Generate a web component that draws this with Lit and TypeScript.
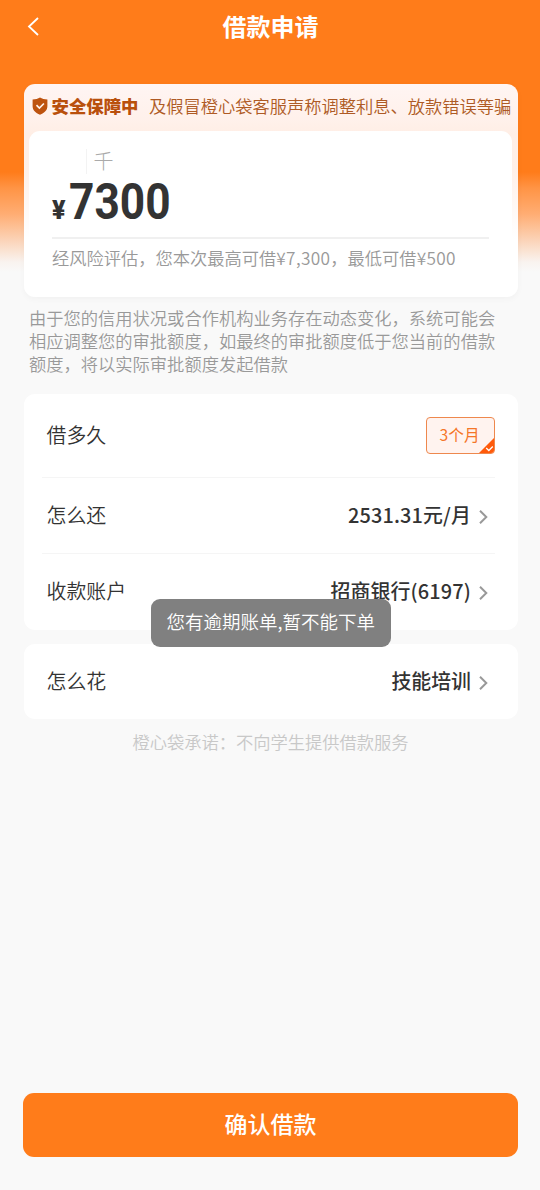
import { LitElement, html, css } from 'lit';
import { customElement, property } from 'lit/decorators.js';

const FONT = css`"Noto Sans CJK SC", sans-serif`;

@customElement('list-row')
class ListRow extends LitElement {
  @property() label = '';
  @property() value = '';
  @property() kind = '';

  static styles = css`
    :host { display: block; }
    .row {
      box-sizing: border-box;
      height: 100%;
      display: flex;
      align-items: center;
      justify-content: space-between;
      font: 350 19.9px/30px ${FONT};
      color: #333;
      white-space: nowrap;
    }
    .label, .value { padding-bottom: 2px; }
    .label { margin-left: -0.5px; }
    .right { display: flex; align-items: center; gap: 8px; font-weight: 500; }
    .arrow { display: block; margin-top: 2px; }
    .money { letter-spacing: 0.15px; }
    .bank { letter-spacing: 0.15px; }
  `;

  render() {
    return html`<div class="row">
      <span class="label">${this.label}</span>
      <slot>
        <span class="right">
          <span class="value ${this.kind}">${this.value}</span>
          <svg class="arrow" width="9" height="14" viewBox="0 0 9 14" fill="none">
            <path d="M1 .8 7.3 7 1 13.2" stroke="#999" stroke-width="2" />
          </svg>
        </span>
      </slot>
    </div>`;
  }
}

@customElement('app-root')
class AppRoot extends LitElement {
  static styles = css`
    :host { display: block; }
    .page {
      position: relative;
      box-sizing: border-box;
      height: 1190px;
      padding: 0 22.5px 0 23.5px;
      display: flex;
      flex-direction: column;
      background: linear-gradient(#ff7c1a 0, #ff7c1a 172px, #ff9445 188px, #ffad73 214px, #fbd3b7 240px, #f9f3ef 262px, #f9f9f9 272px);
      font-family: ${FONT};
      overflow: hidden;
    }
    .header {
      height: 84px;
      flex: none;
      display: grid;
      grid-template-columns: 20px 1fr 20px;
      align-items: start;
    }
    .back { display: block; margin: 17px 0 0 3px; }
    .title {
      margin: 0;
      padding-top: 9px;
      text-align: center;
      font-size: 24px;
      line-height: 34px;
      font-weight: 700;
      color: #fff;
    }
    .quota {
      box-sizing: border-box;
      height: 212.5px;
      flex: none;
      padding: 0 5.5px;
      border-radius: 11px;
      background: linear-gradient(#fff5f3 0, #fff1eb 35px, #ffeee5 50px, #fff0e8 85px, #fff 155px);
      box-shadow: 0 2px 6px rgba(0, 0, 0, 0.035);
      overflow: hidden;
    }
    .notice {
      height: 46.5px;
      box-sizing: border-box;
      display: flex;
      align-items: center;
      padding: 0 0 2px 3px;
      color: #b9500c;
      white-space: nowrap;
    }
    .shield { display: block; margin-right: 3.5px; }
    .guard { font-size: 17.4px; line-height: 24px; font-weight: 900; width: 97.5px; }
    .ticker { font-size: 17.25px; line-height: 24px; font-weight: 350; color: #ae5a24; margin-top: -1px; }
    .inner {
      height: 166px;
      box-sizing: border-box;
      border-radius: 11px;
      background: #fff;
      padding: 18px 23px 0;
    }
    .unit {
      box-sizing: border-box;
      margin-left: 34px;
      width: 28px;
      height: 25px;
      border-left: 1px solid #f3f3f3;
      padding-left: 6.5px;
      font-size: 20px;
      line-height: 23px;
      font-weight: 300;
      color: #aaa;
    }
    .amount {
      height: 63.5px;
      display: flex;
      align-items: baseline;
      color: #333;
      font-family: Roboto, sans-serif;
      font-weight: 700;
    }
    .yen { font-size: 25px; line-height: 58px; width: 17px; font-weight: 900; }
    .num {
      font-size: 50px;
      line-height: 57px;
      transform: scaleX(0.885);
      transform-origin: left;
    }
    .quota-note {
      border-top: 2px solid #f0f0f0;
      padding-top: 7px;
      font-size: 17.25px;
      line-height: 24px;
      font-weight: 350;
      color: #999;
      white-space: nowrap;
    }
    .wide { letter-spacing: 0.35px; }
    .explain {
      flex: none;
      margin: 9.5px 0 0 5.5px;
      width: 475px;
      height: 88px;
      font-size: 17.28px;
      line-height: 23px;
      font-weight: 350;
      color: #999;
    }
    .card {
      flex: none;
      box-sizing: border-box;
      border-radius: 11px;
      background: #fff;
      padding: 0 23px 0 23.5px;
    }
    .terms { height: 236px; display: grid; grid-template-rows: 83px 1px 75px 1px 76px; }
    .usage { height: 75px; margin-top: 14px; display: grid; }
    .line { background: #f5f5f5; margin-left: -5px; }
    .terms list-row, .usage list-row { padding-right: 6.5px; }
    .terms .term-row { padding-right: 0; }
    .chip {
      position: relative;
      box-sizing: border-box;
      width: 69px;
      height: 37px;
      border: 1px solid #ee884d;
      border-radius: 4px;
      background: #fff3ef;
      color: #f57628;
      font-size: 15.7px;
      line-height: 34px;
      font-weight: 400;
      padding-left: 13px;
      overflow: hidden;
    }
    .tick { position: absolute; right: -1px; bottom: -1px; }
    .promise {
      flex: none;
      margin: 11px 0 0;
      text-align: center;
      font-size: 17.28px;
      line-height: 24px;
      font-weight: 350;
      color: #c8c8c8;
      white-space: nowrap;
    }
    .confirm {
      flex: none;
      margin: auto -0.5px 33.5px;
      height: 63.5px;
      border: 0;
      padding: 0 0 4px;
      border-radius: 11px;
      background: #ff7c1a;
      color: #fff;
      font: 500 23px/34px ${FONT};
    }
    .toast {
      position: absolute;
      left: 150.5px;
      top: 599px;
      width: 240.5px;
      height: 47.5px;
      box-sizing: border-box;
      border-radius: 9px;
      background: #808080;
      color: #fff;
      text-align: center;
      font-size: 18.5px;
      line-height: 44px;
      font-weight: 350;
      white-space: nowrap;
    }
  `;

  render() {
    return html`<main class="page">
      <header class="header">
        <svg class="back" width="13" height="20" viewBox="0 0 13 20" fill="none">
          <path d="M11 1 2 9.5 11 18" stroke="#fff" stroke-width="1.8" />
        </svg>
        <h1 class="title">借款申请</h1>
      </header>

      <section class="quota">
        <div class="notice">
          <svg class="shield" width="16" height="18" viewBox="0 0 16 18">
            <path d="M8 .4C10 1.7 12.5 2.3 15.4 2.5V9c0 4.2-3 7.1-7.4 8.7C3.6 16.1.6 13.2.6 9V2.5C3.5 2.3 6 1.7 8 .4Z" fill="#bd530f" />
            <path d="m4.5 8.2 2.9 2.8 4.5-4.5" fill="none" stroke="#fff3ed" stroke-width="1.7" />
          </svg>
          <span class="guard">安全保障中</span>
          <span class="ticker">及假冒橙心袋客服声称调整利息、放款错误等骗</span>
        </div>
        <div class="inner">
          <div class="unit">千</div>
          <div class="amount"><span class="yen">¥</span><span class="num">7300</span></div>
          <div class="quota-note">经风险评估，您本次最高可借<span class="wide">¥7,300</span>，最低可借<span class="wide">¥500</span></div>
        </div>
      </section>

      <p class="explain">由于您的信用状况或合作机构业务存在动态变化，系统可能会相应调整您的审批额度，如最终的审批额度低于您当前的借款额度，将以实际审批额度发起借款</p>

      <section class="card terms">
        <list-row class="term-row" label="借多久">
          <div class="chip">3个月
            <svg class="tick" width="17" height="17" viewBox="0 0 17 17">
              <path d="M17 0v13a4 4 0 0 1-4 4H0Z" fill="#ff5a0a" />
              <path d="m8.2 11 2.6 2.5 4-4" fill="none" stroke="#fff" stroke-width="1.3" />
            </svg>
          </div>
        </list-row>
        <div class="line"></div>
        <list-row label="怎么还" value="2531.31元/月" kind="money"></list-row>
        <div class="line"></div>
        <list-row label="收款账户" value="招商银行(6197)" kind="bank"></list-row>
      </section>

      <section class="card usage">
        <list-row label="怎么花" value="技能培训"></list-row>
      </section>

      <p class="promise">橙心袋承诺：不向学生提供借款服务</p>
      <button class="confirm">确认借款</button>
      <div class="toast" role="status">您有逾期账单,暂不能下单</div>
    </main>`;
  }
}
